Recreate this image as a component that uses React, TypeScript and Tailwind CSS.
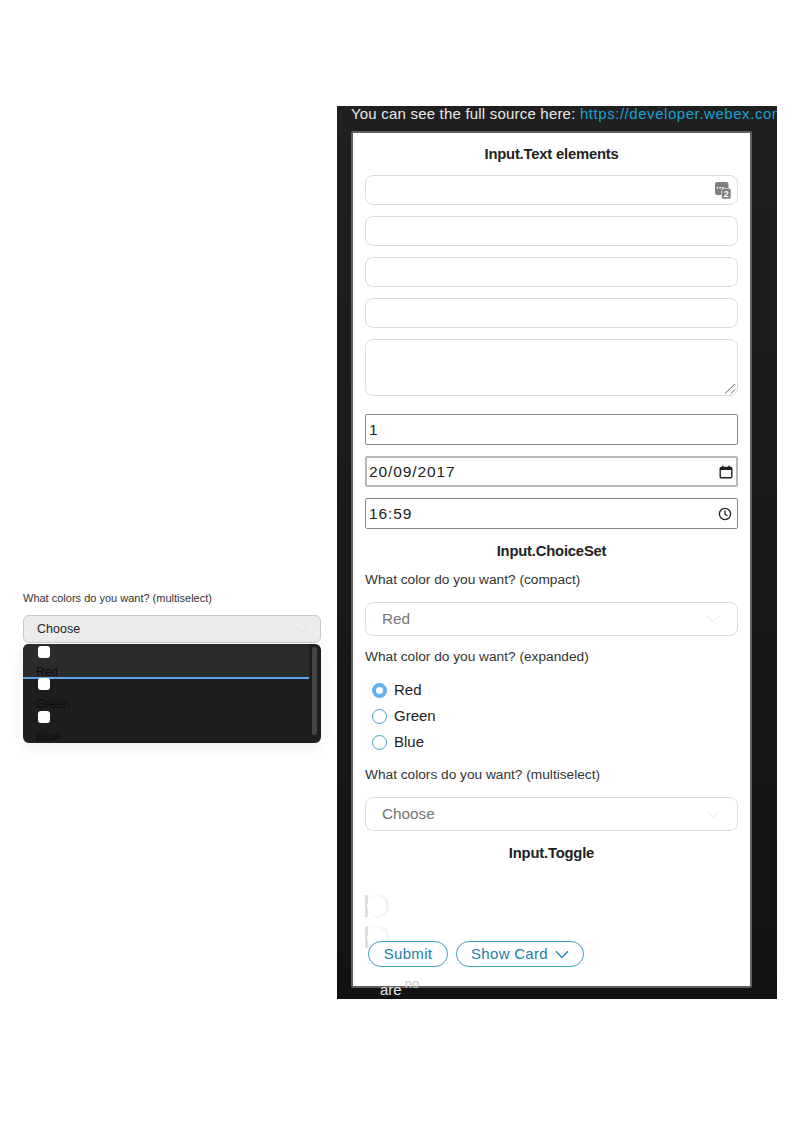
const sans = "font-['Liberation_Sans',Arial,sans-serif]";

const SectionTitle = ({ text, className }: { text: string; className: string }) => (
  <h2
    className={`text-center text-[14.8px] leading-[18px] font-bold tracking-[-0.2px] text-[#222] ${className}`}
  >
    {text}
  </h2>
);

const Label = ({ text, className }: { text: string; className: string }) => (
  <p className={`text-[13.7px] leading-[16px] text-[#333] ${className}`}>{text}</p>
);

const FaintChevron = ({ color = "#f0f0f0" }: { color?: string }) => (
  <svg width="14" height="8" viewBox="0 0 14 8" fill="none" stroke={color} strokeWidth="1.1">
    <path d="M1 1 7 7 13 1" />
  </svg>
);

// custom keyboard-style badge at the end of the first text input
const KeypadIcon = () => (
  <svg width="16" height="17" viewBox="0 0 16 17">
    <rect x="0" y="0" width="13.5" height="13" rx="2" fill="#808080" />
    <rect x="6.5" y="6.5" width="9.5" height="10.5" rx="2" fill="#808080" stroke="#eee" strokeWidth="0.6" />
    <rect x="1.6" y="5" width="1.5" height="1.5" fill="#fff" />
    <rect x="4.4" y="5" width="1.5" height="1.5" fill="#fff" />
    <rect x="7.2" y="5" width="1.5" height="1.5" fill="#fff" />
    <text x="11.2" y="15.4" textAnchor="middle" fontSize="9" fontWeight="700" fill="#fff" fontFamily="Liberation Sans">
      2
    </text>
  </svg>
);

const CalendarIcon = () => (
  <svg className="-mr-[2px]" width="14" height="14" viewBox="0 0 14 14" fill="none">
    <rect x="1.2" y="2.4" width="11.6" height="10.4" rx="1" stroke="#222" strokeWidth="1.4" />
    <rect x="1.2" y="2.4" width="11.6" height="2.6" fill="#222" />
    <rect x="3.2" y="0.6" width="1.4" height="2" fill="#222" />
    <rect x="9.4" y="0.6" width="1.4" height="2" fill="#222" />
  </svg>
);

const ClockIcon = () => (
  <svg width="14" height="14" viewBox="0 0 14 14" fill="none" stroke="#222" strokeWidth="1.3">
    <circle cx="7" cy="7" r="5.6" />
    <path d="M7 3.6V7.2L9.4 8.8" />
  </svg>
);

const ResizeGrip = () => (
  <svg width="12" height="11" viewBox="0 0 12 11" fill="none" stroke="#666" strokeWidth="1">
    <path d="M1 10.5 11 1M7 10.5 11 6.5" />
  </svg>
);

const TextBox = ({ className, icon }: { className?: string; icon?: boolean }) => (
  <div
    className={`flex h-[30px] items-center justify-end rounded-[8px] border border-[#dcdcdc] bg-white pr-[6px] ${className ?? ""}`}
  >
    {icon && <KeypadIcon />}
  </div>
);

const FieldBox = ({
  value,
  className,
  children,
}: {
  value: string;
  className: string;
  children?: React.ReactNode;
}) => (
  <div
    className={`flex h-[31px] items-center justify-between rounded-[2px] bg-white pr-[5px] text-[15.5px] tracking-[0.9px] text-[#222] ${className}`}
  >
    <span>{value}</span>
    {children}
  </div>
);

const ComboBox = ({ value, className }: { value: string; className: string }) => (
  <div
    className={`flex h-[34px] items-center justify-between rounded-[8px] border border-[#dddddd] bg-white pl-[16px] pr-[17px] text-[15.3px] text-[#777] ${className}`}
  >
    <span>{value}</span>
    <FaintChevron />
  </div>
);

const Radio = ({ label, checked }: { label: string; checked?: boolean }) => (
  <div className="flex h-[26px] items-center pl-[7px] text-[15px] text-[#222]">
    {checked ? (
      <span className="h-[15px] w-[15px] rounded-full border-[4px] border-[#64b0f4] bg-white" />
    ) : (
      <span className="h-[15px] w-[15px] rounded-full border border-[#4f9fc4] bg-white" />
    )}
    <span className="ml-[7px]">{label}</span>
  </div>
);

const Toggle = ({ className }: { className: string }) => (
  <div className={`flex h-[23px] items-center ${className}`}>
    <span className="h-[22px] w-[3px] rounded-[1px] bg-[#dedede]" />
    <span className="-ml-[1px] h-[20px] w-[20px] rounded-full bg-white shadow-[1px_0_3px_rgba(0,0,0,0.12)]" />
  </div>
);

const MenuOption = ({ label, className }: { label: string; className?: string }) => (
  <div className={`h-[33px] pl-[15px] ${className ?? ""}`}>
    <span className="relative top-[2px] block h-[12px] w-[12px] rounded-[3px] bg-white" />
    <span className="-ml-[2px] mt-[9px] block text-[12px] leading-[14px] text-[#0e0e0e]">{label}</span>
  </div>
);

const MultiSelectPopup = () => (
  <div className="mt-[592px] w-[298px] shrink-0">
    <p className="text-[11px] leading-[13px] text-[#333]">What colors do you want? (multiselect)</p>
    <div className="mt-[10px] flex h-[28px] items-center justify-between rounded-[6px] border border-[#c9c9c9] bg-[#ececec] pl-[13px] pr-[11px] pt-[1px] text-[12.5px] text-[#222]">
      <span>Choose</span>
      <FaintChevron color="#e4e4e4" />
    </div>
    <div className="mt-[1px] flex h-[99px] overflow-hidden rounded-[6px] bg-[#1e1e1e] shadow-[0_4px_14px_rgba(0,0,0,0.08)]">
      <div className="h-full w-[286px] shrink-0 overflow-hidden">
        <MenuOption label="Red" className="box-content border-b-2 border-[#5aa6e8] bg-[#2b2b2b]" />
        <MenuOption label="Green" className="-mt-[3px]" />
        <MenuOption label="Blue" />
      </div>
      <div className="ml-[3px] mt-[3px] h-[88px] w-[5px] rounded-full bg-[#444]" />
    </div>
  </div>
);

const CardPreview = () => (
  <div className="ml-[16px] mt-[106px] h-[893px] w-[440px] shrink-0 overflow-hidden bg-linear-to-b from-[#202020] to-[#121212]">
    <p className="whitespace-nowrap pl-[14px] text-[15px] leading-[16px] tracking-[0.2px] text-[#e8e8e8]">
      You can see the full source here:{" "}
      <span className="tracking-[0.55px] text-[#18a0d0]">https://developer.webex.com/buttons-and-cards</span>
    </p>
    <div className="relative ml-[14px] mt-[9px] h-[857px] w-[401px] rounded-[2px] border-2 border-[#5f5f5f] bg-white px-[12px] pt-[12px]">
      <SectionTitle text="Input.Text elements" className="" />
      <TextBox icon className="mt-[12px]" />
      <TextBox className="mt-[11px]" />
      <TextBox className="mt-[11px]" />
      <TextBox className="mt-[11px]" />
      <div className="mt-[11px] flex h-[57px] items-end justify-end rounded-[8px] border border-[#dcdcdc] bg-white pb-[1px] pr-[1px]">
        <ResizeGrip />
      </div>
      <FieldBox value="1" className="mt-[18px] border border-[#8a8a8a] pl-[3px]" />
      <FieldBox value="20/09/2017" className="mt-[11px] border-2 border-[#b8b8b8] pl-[2px]">
        <CalendarIcon />
      </FieldBox>
      <FieldBox value="16:59" className="mt-[11px] border border-[#8a8a8a] pl-[3px]">
        <ClockIcon />
      </FieldBox>
      <SectionTitle text="Input.ChoiceSet" className="mt-[13px]" />
      <Label text="What color do you want? (compact)" className="mt-[12px]" />
      <ComboBox value="Red" className="mt-[14px]" />
      <Label text="What color do you want? (expanded)" className="mt-[13px]" />
      <div className="mt-[12px]">
        <Radio label="Red" checked />
        <Radio label="Green" />
        <Radio label="Blue" />
      </div>
      <Label text="What colors do you want? (multiselect)" className="mt-[12px]" />
      <ComboBox value="Choose" className="mt-[14px]" />
      <SectionTitle text="Input.Toggle" className="mt-[13px]" />
      <Toggle className="mt-[32px]" />
      <Toggle className="mt-[8px]" />
      {/* the action row rides up over the second toggle, as in the capture */}
      <div className="relative -mt-[7px] ml-[3px] flex gap-[8px] text-[15px] tracking-[0.3px] text-[#1b7fa8]">
        <button className="h-[26px] w-[80px] rounded-full border border-[#3f9cc0] bg-white">Submit</button>
        <button className="flex h-[26px] w-[128px] items-center justify-center gap-[7px] rounded-full border border-[#3f9cc0] bg-white">
          Show Card
          <svg width="14" height="9" viewBox="0 0 14 9" fill="none" stroke="currentColor" strokeWidth="1.3">
            <path d="M1 1.2 7 7.6 13 1.2" />
          </svg>
        </button>
      </div>
    </div>
    <div className="relative -mt-[13px] ml-[43px] flex items-start text-[15px] leading-[17px] text-[#e8e8e8]">
      <span className="mt-[6px]">are</span>
      <span className="ml-[3px] mt-[4px] text-[13px] leading-[9px] text-[#c8c8c8]">no</span>
    </div>
  </div>
);

export default function App() {
  return (
    <div className={`flex h-[1123px] w-[794px] overflow-hidden bg-white pl-[23px] ${sans}`}>
      <MultiSelectPopup />
      <CardPreview />
    </div>
  );
}
